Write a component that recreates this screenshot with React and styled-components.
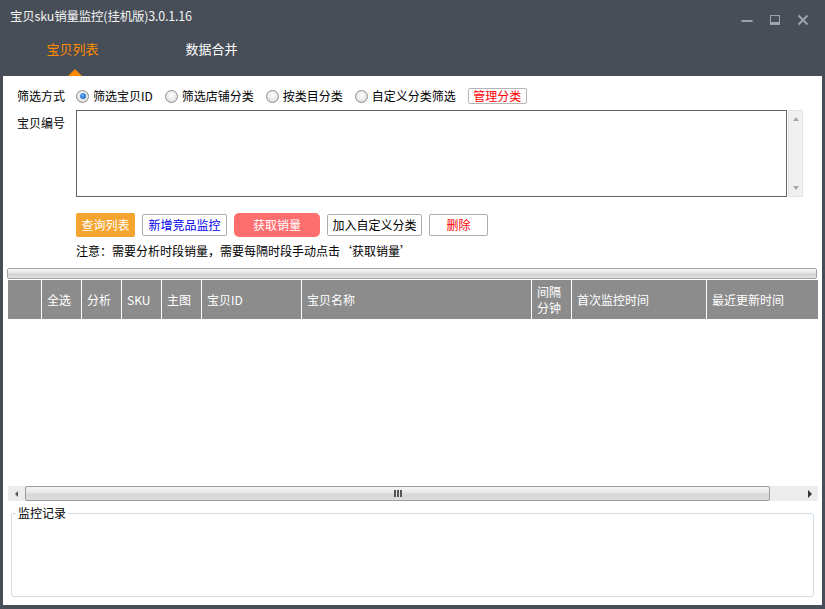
import React from "react";
import styled, { createGlobalStyle } from "styled-components";

const GlobalStyle = createGlobalStyle`
  html, body {
    margin: 0;
    padding: 0;
  }
  body {
    font-family: "Noto Sans CJK SC", "Microsoft YaHei", sans-serif;
    font-size: 12px;
    color: #000;
  }
  * {
    box-sizing: border-box;
  }
`;

const Window = styled.div`
  width: 825px;
  height: 609px;
  background: #474e57;
  padding: 0 3px 4px;
  display: flex;
  flex-direction: column;
`;

const TitleBar = styled.div`
  height: 32px;
  display: flex;
  align-items: center;
  padding-left: 7px;
`;

const Title = styled.span`
  flex: 1;
  color: #f2f2f2;
  font-size: 12.5px;
  line-height: 16px;
  letter-spacing: -0.2px;
`;

const Controls = styled.div`
  align-self: flex-start;
  display: flex;
  padding-top: 10px;
  padding-right: 5px;
`;

const CtrlButton = styled.div`
  width: 28px;
  height: 20px;
  display: flex;
  align-items: center;
  justify-content: center;
`;

const TabBar = styled.div`
  height: 44px;
  display: flex;
`;

const Tab = styled.div`
  position: relative;
  width: 139px;
  display: flex;
  justify-content: center;
  padding-top: 9px;
  font-size: 13px;
  line-height: 16px;
  color: ${(props) => (props.active ? "#ff8a00" : "#ffffff")};
`;

const Arrow = styled.span`
  position: absolute;
  left: 65px;
  bottom: 0;
  width: 0;
  height: 0;
  border-left: 7px solid transparent;
  border-right: 7px solid transparent;
  border-bottom: 7px solid #ff8a00;
`;

const Body = styled.div`
  flex: 1;
  min-height: 0;
  background: #fff;
  display: flex;
  flex-direction: column;
`;

const FilterRow = styled.div`
  display: flex;
  align-items: center;
  height: 16px;
  margin-top: 12px;
  padding-left: 14px;
`;

const Label = styled.span`
  width: 48px;
  margin-right: 11px;
  margin-top: ${(props) => props.top || 0}px;
  line-height: 16px;
  white-space: nowrap;
`;

const Option = styled.label`
  display: flex;
  align-items: center;
  margin-right: 12px;
  line-height: 16px;
  white-space: nowrap;
`;

const Radio = styled.span`
  width: 13px;
  height: 13px;
  margin-right: 4px;
  border-radius: 50%;
  border: 1px solid #8f8f8f;
  background: radial-gradient(circle at 50% 40%, #ffffff 0%, #e8e8e8 55%, #cdcdcd 100%);
  display: flex;
  align-items: center;
  justify-content: center;

  &::after {
    content: "";
    width: 6px;
    height: 6px;
    border-radius: 50%;
    background: ${(props) =>
      props.checked
        ? "radial-gradient(circle at 40% 35%, #6ab4ff, #0b4ea6)"
        : "transparent"};
  }
`;

const ManageButton = styled.span`
  width: 59px;
  height: 16px;
  border: 1px solid #b5b5b5;
  border-radius: 2px;
  color: #ff0000;
  line-height: 14px;
  display: flex;
  justify-content: center;
`;

const InputRow = styled.div`
  display: flex;
  align-items: flex-start;
  margin-top: 6px;
  padding-left: 14px;
`;

const TextArea = styled.textarea`
  width: 711px;
  height: 87px;
  margin: 0 1px 0 0;
  border: 1px solid #646464;
  resize: none;
  outline: none;
  overflow: hidden;
  font-family: inherit;
  font-size: 12px;
`;

const VScroll = styled.div`
  width: 15px;
  height: 87px;
  background: #f0f0f0;
  border: 1px solid #e4e4e4;
  display: flex;
  flex-direction: column;
  align-items: center;
  justify-content: space-between;
  padding: 6px 0;
`;

const TriUp = styled.span`
  width: 0;
  height: 0;
  border-left: 3px solid transparent;
  border-right: 3px solid transparent;
  border-bottom: 4px solid #a8a8a8;
`;

const TriDown = styled.span`
  width: 0;
  height: 0;
  border-left: 3px solid transparent;
  border-right: 3px solid transparent;
  border-top: 4px solid #a8a8a8;
`;

const ButtonRow = styled.div`
  display: flex;
  align-items: center;
  gap: 7px;
  margin-top: 16px;
  padding-left: 73px;
`;

const Button = styled.button`
  width: ${(props) => props.w}px;
  height: ${(props) => (props.fill ? 24 : 22)}px;
  padding: 0;
  font-family: inherit;
  font-size: 12px;
  line-height: 16px;
  cursor: pointer;
  outline: none;
  border-radius: ${(props) => (props.fill === "#ff6e6e" ? 5 : 2)}px;
  border: ${(props) => (props.fill ? "none" : "1px solid #acacac")};
  background: ${(props) => props.fill || "#fff"};
  color: ${(props) => props.color || "#000"};
`;

const Note = styled.div`
  margin-top: 6px;
  padding-left: 73px;
  line-height: 16px;
`;

const ProgressBar = styled.div`
  margin: 9px 5px 0 4px;
  height: 11px;
  border: 1px solid #a3a3a3;
  border-radius: 2px;
  background: linear-gradient(#f6f6f6, #e4e4e4 45%, #d2d2d2 55%, #e0e0e0);
`;

const Table = styled.div`
  flex: 1;
  min-height: 0;
  margin: 1px 4px 0 5px;
  display: flex;
  flex-direction: column;
`;

const HeaderGrid = styled.div`
  display: grid;
  grid-template-columns: 33px 39px 39px 39px 39px 99px 229px 39px 134px 111px;
  column-gap: 1px;
  height: 39px;
  background: #fff;
`;

const HeaderCell = styled.div`
  background: #8c8c8c;
  color: #fff;
  padding-left: 5px;
  display: flex;
  align-items: center;
  line-height: 16px;
  white-space: nowrap;
`;

const TableBody = styled.div`
  flex: 1;
  background: #fff;
`;

const HScroll = styled.div`
  height: 15px;
  background: #ececec;
  display: flex;
  align-items: stretch;
`;

const ArrowBox = styled.div`
  width: ${(props) => props.w}px;
  display: flex;
  align-items: center;
  justify-content: ${(props) => props.justify || "center"};
  padding-right: ${(props) => props.pr || 0}px;
`;

const TriLeft = styled.span`
  width: 0;
  height: 0;
  border-top: 3px solid transparent;
  border-bottom: 3px solid transparent;
  border-right: 3px solid #555;
`;

const TriRight = styled.span`
  width: 0;
  height: 0;
  border-top: 4px solid transparent;
  border-bottom: 4px solid transparent;
  border-left: 4px solid #333;
`;

const Thumb = styled.div`
  width: 745px;
  border: 1px solid #9c9c9c;
  border-radius: 2px;
  background: linear-gradient(#f4f4f4, #e6e6e6 45%, #d6d6d6 55%, #dcdcdc);
  display: flex;
  align-items: center;
  justify-content: center;
`;

const Grip = styled.span`
  width: 8px;
  height: 7px;
  background: repeating-linear-gradient(90deg, #555 0 2px, #e8e8e8 2px 3px);
`;

const Fieldset = styled.fieldset`
  margin: 5px 8px 8px;
  padding: 0;
  height: 91px;
  min-width: 0;
  border: 1px solid #d2dce5;
  border-radius: 3px;
`;

const Legend = styled.legend`
  margin-left: 4px;
  padding: 0 2px;
  font-size: 12px;
  line-height: 14px;
`;

const Minimize = () => (
  <svg width="12" height="12" viewBox="0 0 12 12">
    <line x1="0.5" y1="7" x2="11.5" y2="7" stroke="#9ea4a9" strokeWidth="2" />
  </svg>
);

const Maximize = () => (
  <svg width="12" height="12" viewBox="0 0 12 12">
    <rect x="1.5" y="1.5" width="9" height="9" fill="none" stroke="#9ea4a9" strokeWidth="1" />
    <rect x="1" y="8" width="10" height="3" fill="#9ea4a9" />
  </svg>
);

const Close = () => (
  <svg width="12" height="12" viewBox="0 0 12 12">
    <path d="M1.5 1.5 L10.5 10.5 M10.5 1.5 L1.5 10.5" stroke="#9ea4a9" strokeWidth="2" />
  </svg>
);

const options = [
  { label: "筛选宝贝ID", checked: true },
  { label: "筛选店铺分类" },
  { label: "按类目分类" },
  { label: "自定义分类筛选" },
];

const buttons = [
  { text: "查询列表", w: 59, fill: "#f5a430", color: "#fff" },
  { text: "新增竞品监控", w: 85, color: "#0000ee" },
  { text: "获取销量", w: 86, fill: "#ff6e6e", color: "#fff" },
  { text: "加入自定义分类", w: 95 },
  { text: "删除", w: 59, color: "#ff0000" },
];

const columns = [
  "",
  "全选",
  "分析",
  "SKU",
  "主图",
  "宝贝ID",
  "宝贝名称",
  <>
    间隔
    <br />
    分钟
  </>,
  "首次监控时间",
  "最近更新时间",
];

const App = () => {
  return (
    <>
      <GlobalStyle />
      <Window>
        <TitleBar>
          <Title>宝贝sku销量监控(挂机版)3.0.1.16</Title>
          <Controls>
            <CtrlButton>
              <Minimize />
            </CtrlButton>
            <CtrlButton>
              <Maximize />
            </CtrlButton>
            <CtrlButton>
              <Close />
            </CtrlButton>
          </Controls>
        </TitleBar>
        <TabBar>
          <Tab active>
            宝贝列表
            <Arrow />
          </Tab>
          <Tab>数据合并</Tab>
        </TabBar>
        <Body>
          <FilterRow>
            <Label>筛选方式</Label>
            {options.map((o, i) => (
              <Option key={i}>
                <Radio checked={o.checked} />
                {o.label}
              </Option>
            ))}
            <ManageButton>管理分类</ManageButton>
          </FilterRow>
          <InputRow>
            <Label top={5}>宝贝编号</Label>
            <TextArea />
            <VScroll>
              <TriUp />
              <TriDown />
            </VScroll>
          </InputRow>
          <ButtonRow>
            {buttons.map((b, i) => (
              <Button key={i} w={b.w} fill={b.fill} color={b.color}>
                {b.text}
              </Button>
            ))}
          </ButtonRow>
          <Note>注意：需要分析时段销量，需要每隔时段手动点击‘获取销量’</Note>
          <ProgressBar />
          <Table>
            <HeaderGrid>
              {columns.map((c, i) => (
                <HeaderCell key={i}>{c}</HeaderCell>
              ))}
            </HeaderGrid>
            <TableBody />
            <HScroll>
              <ArrowBox w={17}>
                <TriLeft />
              </ArrowBox>
              <Thumb>
                <Grip />
              </Thumb>
              <ArrowBox w={48} justify="flex-end" pr={6}>
                <TriRight />
              </ArrowBox>
            </HScroll>
          </Table>
          <Fieldset>
            <Legend>监控记录</Legend>
          </Fieldset>
        </Body>
      </Window>
    </>
  );
};

export default App;
